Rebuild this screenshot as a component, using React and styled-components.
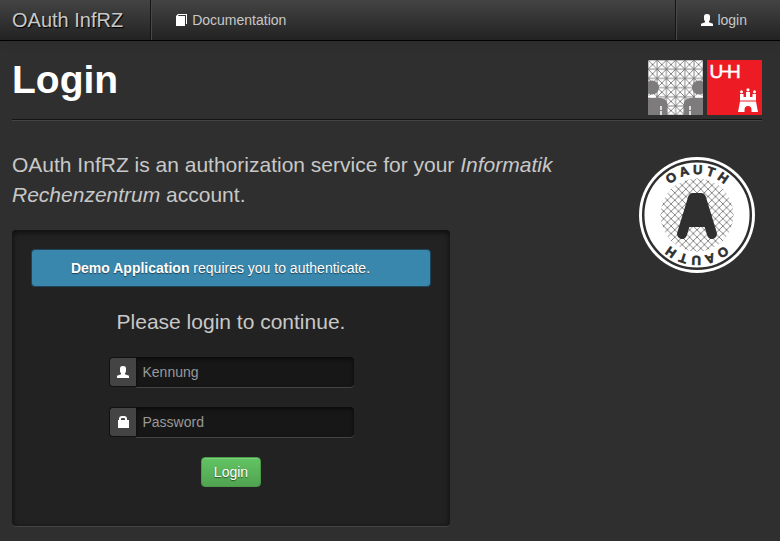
import React from 'react';
import styled, { createGlobalStyle } from 'styled-components';

const GlobalStyle = createGlobalStyle`
  * { box-sizing: border-box; }
  body {
    margin: 0;
    background: #2f2f2f;
    color: #c8c8c8;
    font: 14px/20px "Liberation Sans", Arial, sans-serif;
  }
`;

const Navbar = styled.nav`
  display: flex;
  align-items: stretch;
  height: 41px;
  padding: 0 8px 0 12px;
  background: linear-gradient(#444, #222);
  border-bottom: 1px solid #000;
  box-shadow: 0 1px 10px rgba(0, 0, 0, 0.1);
`;

const Brand = styled.a`
  display: flex;
  align-items: center;
  padding-right: 27px;
  color: #c8c8c8;
  font-size: 20px;
  text-decoration: none;
  text-shadow: 1px 1px 1px #000;
`;

const NavLink = styled.a`
  display: flex;
  align-items: center;
  gap: 3px;
  padding: 0 25px 0 24px;
  margin-left: ${(p) => (p.$right ? 'auto' : '0')};
  border-left: 1px solid #151515;
  box-shadow: inset 1px 0 #484848;
  color: #c8c8c8;
  text-decoration: none;
`;

const Icon = styled.svg`
  display: block;
  width: 14px;
  height: 14px;
  fill: #fff;
`;

const Page = styled.main`
  padding: 19px 18px 15px 12px;
`;

const PageHeader = styled.header`
  display: flex;
  justify-content: space-between;
  align-items: flex-start;
  height: 60px;
  border-bottom: 1px solid #141414;
  box-shadow: 0 1px #444;
`;

const Title = styled.h1`
  margin: 0;
  color: #fff;
  font-size: 39px;
  line-height: 40px;
`;

const Logos = styled.div`
  display: flex;
  gap: 4px;
`;

const Logo = styled.svg`
  display: block;
  width: 55px;
  height: 55px;
`;

const Intro = styled.section`
  display: flex;
  justify-content: space-between;
  align-items: flex-start;
  gap: 20px;
  padding: 30px 7px 0 0;
`;

const Lead = styled.p`
  flex: 1;
  margin: 0;
  font-size: 21px;
  line-height: 30px;
`;

const Seal = styled.svg`
  display: block;
  flex: none;
  width: 116px;
  height: 116px;
  margin: 7px 0 -63px;
`;

const Well = styled.section`
  width: 58.4%;
  min-width: 300px;
  margin-top: 20px;
  padding: 19px;
  min-height: 296px;
  background: #222;
  border-radius: 4px;
  box-shadow: inset 0 2px 6px rgba(0, 0, 0, 0.7), 0 1px #444;
`;

const Alert = styled.p`
  margin: 0 0 20px;
  padding: 8px 35px 8px 14px;
  background: #3a87ad;
  border: 1px solid #1e4459;
  border-radius: 4px;
  color: #fff;
  text-align: center;
  text-shadow: 0 1px 1px rgba(0, 0, 0, 0.5);
`;

const LoginForm = styled.form`
  display: flex;
  flex-direction: column;
  align-items: center;
  gap: 20px;
`;

const Prompt = styled.h2`
  margin: 0;
  font-size: 21px;
  font-weight: normal;
  line-height: 30px;
`;

const Field = styled.div`
  display: flex;
  width: 245px;
  height: 30px;
`;

const FieldLabel = styled.label`
  display: flex;
  align-items: center;
  justify-content: center;
  width: 27px;
  background: #444;
  border: 1px solid #111;
  border-right: 0;
  border-radius: 4px 0 0 4px;
`;

const TextBox = styled.input`
  flex: 1;
  min-width: 0;
  padding: 4px 7px;
  background: #171717;
  border: 0;
  border-radius: 0 4px 4px 0;
  box-shadow: inset 0 2px 4px rgba(0, 0, 0, 0.6), 0 1px #444;
  color: #c8c8c8;
  font: inherit;
  &::placeholder { color: #999; opacity: 1; }
`;

const SubmitButton = styled.button`
  height: 30px;
  padding: 4px 12px;
  background: linear-gradient(#62c462, #51a351);
  border: 1px solid #4a9a4a;
  border-radius: 4px;
  box-shadow: inset 0 1px rgba(255, 255, 255, 0.2);
  color: #fff;
  font: inherit;
  text-shadow: 0 1px 1px rgba(0, 0, 0, 0.5);
`;

const UserIcon = () => (
  <Icon viewBox="0 0 14 14" aria-hidden="true">
    <path d="M4 3.500C4 1.800 5 1 7 1s3 .8 3 2.500V6c0 1-.4 1.700-1 2.200v1l4 1.600V13H1v-2.200l4-1.600v-1C4.400 7.700 4 7 4 6z" />
  </Icon>
);

const LockIcon = () => (
  <Icon viewBox="0 0 14 14" aria-hidden="true">
    <path fillRule="evenodd" d="M3 5V4q0-3 3-3h2q3 0 3 3v1h2v8H2V5zm2 0h4V4q0-1-1-1H6Q5 3 5 4z" />
  </Icon>
);

const BookIcon = () => (
  <Icon viewBox="0 0 14 14" aria-hidden="true">
    <path d="M1 3l2-2h9v10h-1V2H3.500l-.5 1H10v10H1z" />
  </Icon>
);

const InformatikLogo = () => (
  <Logo viewBox="0 0 55 55" role="img" aria-label="Informatik">
    <defs>
      <pattern id="truss" width="9.200" height="9.200" patternUnits="userSpaceOnUse">
        <path d="M0 0H9.200V9.200H0zM0 0L9.200 9.200M9.200 0L0 9.200" fill="none" stroke="#777" strokeWidth="0.900" />
      </pattern>
    </defs>
    <path fill="#fff" d="M0 0h55v55H0z" />
    <path fill="url(#truss)" d="M0 0h55v55H0z" />
    <g fill="#7d7b7c">
      <circle cx="4" cy="27.500" r="7" />
      <circle cx="51" cy="27.500" r="7" />
      <path d="M0 38h13q6.500 1 6.500 7v10H0zM55 38H42q-6.500 1-6.500 7v10H55z" />
    </g>
    <path d="M0 36.500h8M47 36.500h8" stroke="#fff" strokeWidth="2" />
    <path d="M13 46v9M42 46v9" stroke="#fff" strokeWidth="1.500" strokeDasharray="4 1" />
  </Logo>
);

const UniversityLogo = () => (
  <Logo viewBox="0 0 55 55" role="img" aria-label="UHH">
    <path fill="#ed1c24" d="M0 0h55v55H0z" />
    <g fill="#fff" stroke="#fff" strokeWidth="0.500" fontFamily="Liberation Sans, Arial, sans-serif" fontSize="19">
      <text x="2.500" y="18">U</text>
      <text x="20" y="18">H</text>
    </g>
    <path d="M14 11.500h10" stroke="#fff" strokeWidth="2" />
    <g fill="#fff">
      <path d="M31 52l2-10.500h16L51 52h-6.500v-2q0-4-3.500-4t-3.500 4v2z" />
      <path d="M33 34h3.500v3h2.500v-5h4v5h2.500v-3H49v6.500H33z" />
      <circle cx="34.500" cy="31.800" r="1.500" />
      <circle cx="41" cy="29.800" r="1.600" />
      <circle cx="47.500" cy="31.800" r="1.500" />
    </g>
  </Logo>
);

const OAuthSeal = () => (
  <Seal viewBox="-58 -58 116 116" role="img" aria-label="OAuth">
    <defs>
      <pattern id="mesh" width="7.400" height="7.400" patternUnits="userSpaceOnUse">
        <path d="M0 0L7.400 7.400M7.400 0L0 7.400" stroke="#555" strokeWidth="0.700" />
      </pattern>
      <path id="arc" d="M-41 0A41 41 0 0 1 41 0" />
    </defs>
    <circle r="58" fill="#fff" />
    <circle r="53.800" fill="none" stroke="#2f2f2f" strokeWidth="2.500" />
    <circle r="36.500" fill="url(#mesh)" />
    <path
      d="M-4-17H4L15 19M-4-17L-15 19"
      fill="none" stroke="#2f2f2f" strokeWidth="10" strokeLinecap="round" strokeLinejoin="round"
    />
    <path fill="#2f2f2f" d="M-5-20H5L15 12H-15z" />
    {[0, 180].map((turn) => (
      <text
        key={turn} transform={`rotate(${turn})`} fill="#2f2f2f" stroke="#2f2f2f" strokeWidth="0.600"
        fontFamily="Liberation Sans, Arial, sans-serif" fontWeight="bold" fontSize="13" textAnchor="middle"
      >
        <textPath href="#arc" startOffset="50%">O A U T H</textPath>
      </text>
    ))}
  </Seal>
);

export default function App() {
  return (
    <>
      <GlobalStyle />
      <Navbar>
        <Brand href="#">OAuth InfRZ</Brand>
        <NavLink href="#documentation"><BookIcon />Documentation</NavLink>
        <NavLink href="#login" $right><UserIcon />login</NavLink>
      </Navbar>
      <Page>
        <PageHeader>
          <Title>Login</Title>
          <Logos>
            <InformatikLogo />
            <UniversityLogo />
          </Logos>
        </PageHeader>
        <Intro>
          <Lead>
            OAuth InfRZ is an authorization service for your <em>Informatik Rechenzentrum</em> account.
          </Lead>
          <OAuthSeal />
        </Intro>
        <Well>
          <Alert><strong>Demo Application</strong> requires you to authenticate.</Alert>
          <LoginForm onSubmit={(e) => e.preventDefault()}>
            <Prompt>Please login to continue.</Prompt>
            <Field>
              <FieldLabel htmlFor="username" aria-label="Kennung"><UserIcon /></FieldLabel>
              <TextBox id="username" type="text" placeholder="Kennung" />
            </Field>
            <Field>
              <FieldLabel htmlFor="password" aria-label="Password"><LockIcon /></FieldLabel>
              <TextBox id="password" type="password" placeholder="Password" />
            </Field>
            <SubmitButton type="submit">Login</SubmitButton>
          </LoginForm>
        </Well>
      </Page>
    </>
  );
}
